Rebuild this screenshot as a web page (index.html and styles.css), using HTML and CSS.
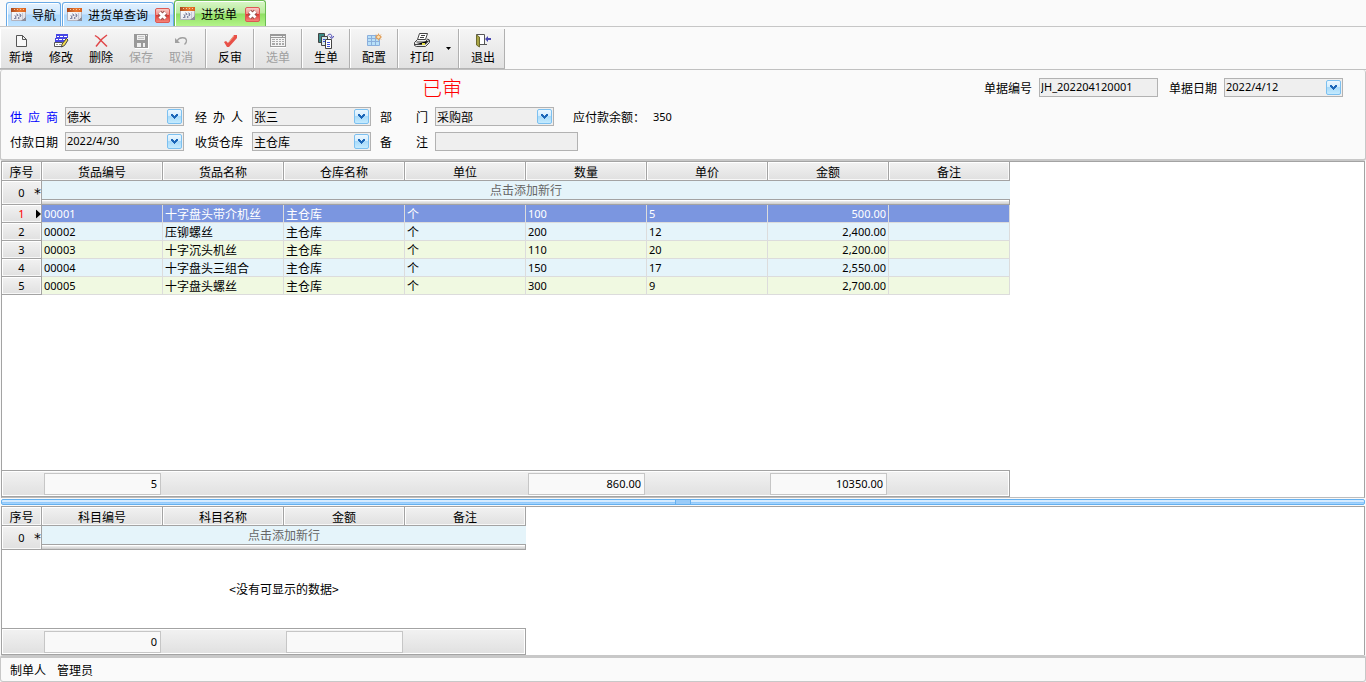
FILE: index.html
```html
<!DOCTYPE html>
<html lang="zh-CN">
<head>
<meta charset="utf-8">
<title>进货单</title>
<link rel="stylesheet" href="styles.css">
</head>
<body>
<svg class="defs" aria-hidden="true">
  <defs>
    <linearGradient id="btn-blue" x1="0" y1="0" x2="0" y2="1">
      <stop offset="0" stop-color="#eef8ff"/><stop offset=".48" stop-color="#d2ecfd"/>
      <stop offset=".5" stop-color="#a9daf9"/><stop offset="1" stop-color="#c6ecff"/>
    </linearGradient>
    <linearGradient id="btn-red" x1="0" y1="0" x2="0" y2="1">
      <stop offset="0" stop-color="#fbd0cc"/><stop offset=".48" stop-color="#f08a84"/>
      <stop offset=".5" stop-color="#e03a33"/><stop offset="1" stop-color="#f68a80"/>
    </linearGradient>
    <linearGradient id="cal-head" x1="0" y1="0" x2="1" y2="0">
      <stop offset="0" stop-color="#a8481c"/><stop offset=".6" stop-color="#ec7a30"/><stop offset="1" stop-color="#d9601c"/>
    </linearGradient>
    <linearGradient id="cal-page" x1="0" y1="0" x2="1" y2="1">
      <stop offset="0" stop-color="#fff"/><stop offset="1" stop-color="#dcdce4"/>
    </linearGradient>
  </defs>
  <symbol id="i-sheet" viewBox="0 0 16 16">
    <path fill="url(#cal-page)" stroke="#b4b4be" d="M.5 2.500h14v11H.5z"/>
    <path fill="url(#cal-head)" d="M0 1h15v4H0z"/>
    <path fill="#f6c6a4" d="M3 2h1v1H3zM6 2h1v1H6zM9 2h1v1H9zM12 2h1v1h-1z"/>
    <path fill="#c4c6d4" d="M5 6h1v6H5zM8 6h1v6H8zM11 6h1v6h-1zM3 8h9v1H3z"/>
    <path fill="#8488a4" d="M4 9h1v3H4zM6 7h1v2H6zM7 10h1v2H7zM9 7h1v3H9zM3 11h2v1H3z"/>
    <path fill="#8c8c98" d="M15 9v5h-5l2-2h1v-1h1z"/>
  </symbol>
  <symbol id="i-close" viewBox="0 0 15 15">
    <rect x=".5" y=".5" width="14" height="14" rx="1.500" fill="url(#btn-red)" stroke="#dc5a54"/>
    <path stroke="#98524e" stroke-width="4.600" d="M4.500 4.500l6 6M10.500 4.500l-6 6"/>
    <path stroke="#fff" stroke-width="2.800" d="M4.500 4.500l6 6M10.500 4.500l-6 6"/>
  </symbol>
  <symbol id="i-drop" viewBox="0 0 15 15">
    <rect x=".5" y=".5" width="14" height="14" rx="1.500" fill="url(#btn-blue)" stroke="#7cc0f0"/>
    <path fill="#1c66b8" d="M4 5h2v1h1v1h1V6h1V5h2v2h-1v1H9v1H8v1H7V9H6V8H5V7H4z"/>
  </symbol>
</svg>

<nav class="tabs">
  <a class="tab" href="#nav"><svg class="ico"><use href="#i-sheet"/></svg><span>导航</span></a>
  <div class="tab tab-closable"><a href="#query"><svg class="ico"><use href="#i-sheet"/></svg><span>进货单查询</span></a><button class="tab-close" aria-label="关闭进货单查询"><svg><use href="#i-close"/></svg></button></div>
  <div class="tab tab-closable tab-active"><a href="#order" aria-current="page"><svg class="ico"><use href="#i-sheet"/></svg><span>进货单</span></a><button class="tab-close" aria-label="关闭进货单"><svg><use href="#i-close"/></svg></button></div>
</nav>

<header class="toolbar-row">
  <div class="toolbar" role="toolbar" aria-label="单据操作">
    <div class="tool-group tool-group-first">
      <button class="tool"><svg class="ico" viewBox="0 0 16 16"><path fill="#f8f8f8" stroke="#555" d="M3.500 2.500h6l4 4v7h-10zM9.500 2.500v4h4"/></svg><span>新增</span></button>
      <button class="tool"><svg class="ico" viewBox="0 0 16 16"><path fill="#4646e4" d="M3 1h12v4H3zM2 5h12v4H2z"/><path fill="#fff" d="M4 3h2v1H4zM7 3h3v1H7zM11 3h3v1h-3zM3 6h2v1H3zM6 6h3v1H6zM10 6h2v1h-2z"/><path fill="#fff" stroke="#555" d="M1.500 9.500h8v4h-8z"/><path stroke="#999" stroke-dasharray="2 1" d="M3 11.500h6"/><path fill="#f6dc4a" stroke="#444" d="M13.500 5.500l1.500 1.500-3.500 5.500-3 1.500.5-3z"/></svg><span>修改</span></button>
      <button class="tool"><svg class="ico" viewBox="0 0 16 16"><path fill="none" stroke="#e0484a" stroke-width="1.500" d="M2 2.500l3 2 9 9M14 2L9 6l-6 7.500"/></svg><span>删除</span></button>
      <button class="tool" disabled><svg class="ico" viewBox="0 0 16 16"><path fill="#fff" d="M2 3h14v13H2z"/><path fill="#999" d="M1 1h14v14H2l-1-1z"/><path fill="#f0f0f0" d="M4 2h8v5H4zM13 2h1v1h-1zM4 10h4v4H4zM10 10h2v4h-2z"/><path stroke="#c4c4c4" d="M5 3.500h6M5 5.500h6"/></svg><span>保存</span></button>
      <button class="tool" disabled><svg class="ico" viewBox="0 0 16 16"><path fill="none" stroke="#a0a0a0" stroke-width="1.300" d="M4 8c2-4 9-4.500 9.500-.5.2 2-1 3-2 4"/><path fill="#a0a0a0" d="M2 5v5h5z"/></svg><span>取消</span></button>
    </div>
    <div class="tool-group"><button class="tool"><svg class="ico" viewBox="0 0 16 16"><path fill="#e85048" d="M2 9l2-1 2 2 6-8h3v3L7 14H5z"/><path stroke="#f0a080" d="M7 9l5-6"/></svg><span>反审</span></button></div>
    <div class="tool-group"><button class="tool" disabled><svg class="ico" viewBox="0 0 16 16"><path fill="#fff" d="M1 3h16v12H1z"/><path fill="#999" d="M0 1h16v13H0z"/><path fill="#f4f4f4" d="M1 5h14v8H1zM1 3h11v1H1zM13 3h2v1h-2z"/><path fill="#aaa" d="M2 6h3v1H2zM6 6h2v1H6zM9 6h2v1H9zM12 6h2v1h-2zM2 8h3v1H2zM6 8h2v1H6zM9 8h2v1H9zM12 8h2v1h-2zM2 10h3v2H2zM6 10h2v2H6zM9 10h2v2H9zM12 10h2v2h-2z"/></svg><span>选单</span></button></div>
    <div class="tool-group"><button class="tool"><svg class="ico" viewBox="0 0 16 16"><path fill="#3a8a86" stroke="#444" d="M.5.500h6v9h-6z"/><path fill="#d8e8ec" stroke="#444" d="M3.500 3.500h6v9h-6z"/><path fill="#fff" stroke="#444" d="M7.500 6.500h6v9h-6z"/><path stroke="#3f51d8" d="M9 9.500h3M9 11.500h3M9 13.500h3M5 6.500h2M5 8.500h2"/><path fill="none" stroke="#4a48b4" d="M9.500 2.500q4-3.500 4.500 2M11.500 3.500l2.500 2 2-2.500"/></svg><span>生单</span></button></div>
    <div class="tool-group"><button class="tool"><svg class="ico" viewBox="0 0 16 16"><path fill="#b8e0f8" stroke="#8aaedc" d="M1.500 2.500h12v10h-12z"/><path stroke="#8aaedc" d="M5.500 3v9M9.500 3v9M2 5.500h11M2 8.500h11"/><path stroke="#e8a868" d="M12.500.500v7M9 4h7M10 1.500l5 5M15 1.500l-5 5"/><circle cx="12.500" cy="4" r="2" fill="#ffe0b0" stroke="#dc9850"/></svg><span>配置</span></button></div>
    <div class="tool-group">
      <button class="tool"><svg class="ico" viewBox="0 0 16 16"><path fill="#fff" stroke="#444" d="M5.500.500h8l-2 6h-8z"/><path stroke="#444" d="M7 2.500h4M6 4.500h4"/><path fill="#e8e8e8" stroke="#444" d="M3.500 6.500l-3 3v3l2 1h9l4-4V7l-2-1-2 3h-9"/><path stroke="#444" d="M1 11.500h10l4-4"/><path fill="#e8e048" d="M8 10h3v2H8z"/></svg><span>打印</span></button>
      <button class="tool-more" aria-label="打印选项"><svg viewBox="0 0 5 3"><path d="M0 0h5L2.500 3z"/></svg></button>
    </div>
    <div class="tool-group tool-group-last"><button class="tool"><svg class="ico" viewBox="0 0 16 16"><path fill="#fff" stroke="#555" d="M1.500 1.500h8v10h-8z"/><path fill="#a8a444" stroke="#6c6a30" d="M1.500 2l3 2v10l-3-2z"/><path fill="none" stroke="#555" d="M5 11.500h7"/><path fill="#4a48b0" d="M10 6l3-3v2h3v2h-3v2z"/></svg><span>退出</span></button></div>
  </div>
</header>

<form class="order-form">
  <div class="form-head">
    <strong class="status">已审</strong>
    <div class="doc-fields">
      <label for="doc-no">单据编号</label><input class="field" id="doc-no" value="JH_202204120001" readonly>
      <label class="doc-date-label" for="doc-date">单据日期</label>
      <div class="field combo"><input id="doc-date" value="2022/4/12" readonly><button type="button" aria-label="选择单据日期"><svg><use href="#i-drop"/></svg></button></div>
    </div>
  </div>
  <div class="form-grid">
    <label class="required" for="supplier">供 应 商</label>
    <div class="field combo"><select id="supplier"><option>德米</option></select><svg><use href="#i-drop"/></svg></div>
    <label for="handler">经 办 人</label>
    <div class="field combo"><select id="handler"><option>张三</option></select><svg><use href="#i-drop"/></svg></div>
    <label for="dept">部 门</label>
    <div class="field combo"><select id="dept"><option>采购部</option></select><svg><use href="#i-drop"/></svg></div>
    <p class="payable"><span>应付款余额：</span><span class="num">350</span></p>
    <label for="pay-date">付款日期</label>
    <div class="field combo"><input id="pay-date" value="2022/4/30" readonly><button type="button" aria-label="选择付款日期"><svg><use href="#i-drop"/></svg></button></div>
    <label for="warehouse">收货仓库</label>
    <div class="field combo"><select id="warehouse"><option>主仓库</option></select><svg><use href="#i-drop"/></svg></div>
    <label for="remark">备 注</label>
    <input class="field remark" id="remark" readonly>
  </div>
</form>

<main class="panes">
  <section class="pane pane-items" aria-label="货品明细">
    <table class="grid grid-items">
      <colgroup><col class="col-no"><col span="8"></colgroup>
      <thead><tr><th>序号</th><th>货品编号</th><th>货品名称</th><th>仓库名称</th><th>单位</th><th>数量</th><th>单价</th><th>金额</th><th>备注</th></tr></thead>
      <tbody>
        <tr class="new-row"><th><span class="row-no">0</span><span class="mark">*</span></th><td colspan="8"><div class="new-hint">点击添加新行</div><div class="new-bar"></div></td></tr>
        <tr class="selected"><th><span class="row-no">1</span><svg class="mark" viewBox="0 0 5 9"><path d="M0 0l5 4.500L0 9z"/></svg></th><td class="num">00001</td><td>十字盘头带介机丝</td><td>主仓库</td><td>个</td><td class="num">100</td><td class="num">5</td><td class="num money">500.00</td><td></td></tr>
        <tr><th><span class="row-no">2</span></th><td class="num">00002</td><td>压铆螺丝</td><td>主仓库</td><td>个</td><td class="num">200</td><td class="num">12</td><td class="num money">2,400.00</td><td></td></tr>
        <tr class="alt"><th><span class="row-no">3</span></th><td class="num">00003</td><td>十字沉头机丝</td><td>主仓库</td><td>个</td><td class="num">110</td><td class="num">20</td><td class="num money">2,200.00</td><td></td></tr>
        <tr><th><span class="row-no">4</span></th><td class="num">00004</td><td>十字盘头三组合</td><td>主仓库</td><td>个</td><td class="num">150</td><td class="num">17</td><td class="num money">2,550.00</td><td></td></tr>
        <tr class="alt"><th><span class="row-no">5</span></th><td class="num">00005</td><td>十字盘头螺丝</td><td>主仓库</td><td>个</td><td class="num">300</td><td class="num">9</td><td class="num money">2,700.00</td><td></td></tr>
      </tbody>
    </table>
    <div class="pane-space"></div>
    <div class="summary summary-items">
      <span></span><output class="sum">5</output><span></span><span></span><span></span><output class="sum">860.00</output><span></span><output class="sum">10350.00</output><span></span>
    </div>
  </section>

  <div class="splitter" role="separator" aria-orientation="horizontal"><span class="grip"></span></div>

  <section class="pane pane-subjects" aria-label="科目明细">
    <table class="grid grid-subjects">
      <colgroup><col class="col-no"><col span="4"></colgroup>
      <thead><tr><th>序号</th><th>科目编号</th><th>科目名称</th><th>金额</th><th>备注</th></tr></thead>
      <tbody>
        <tr class="new-row"><th><span class="row-no">0</span><span class="mark">*</span></th><td colspan="4"><div class="new-hint">点击添加新行</div><div class="new-bar"></div></td></tr>
      </tbody>
    </table>
    <p class="empty">&lt;没有可显示的数据&gt;</p>
    <div class="summary summary-subjects">
      <span></span><output class="sum">0</output><span></span><output class="sum"></output><span></span>
    </div>
  </section>
</main>

<footer class="status-bar"><span>制单人</span><span>管理员</span></footer>
</body>
</html>
```

FILE: styles.css
```css
:root {
  --cjk: "Noto Sans CJK SC", sans-serif;
  --latin: "Noto Sans", "Noto Sans CJK SC", sans-serif;
  --line: #a3a3a3;
  --band: #c8c8c8;
  --face: linear-gradient(#f2f2f2, #e0e0e0);
}

* { box-sizing: border-box; }

body {
  margin: 0;
  min-height: 100vh;
  display: flex;
  flex-direction: column;
  background: #fafafa;
  color: #000;
  font: 12px/16px var(--cjk);
}

button, input, select {
  margin: 0;
  padding: 0;
  border: 0;
  background: none;
  color: inherit;
  font: inherit;
}

p { margin: 0; }
svg { display: block; flex: none; }
.defs { position: absolute; width: 0; height: 0; }
.ico { width: 16px; height: 16px; }
.num { font-family: var(--latin); font-size: 11px; }

/* Tabs */
.tabs {
  display: flex;
  align-items: flex-end;
  height: 27px;
  padding-left: 6px;
  border-bottom: 1px solid #c6c6c6;
}
.tab {
  display: flex;
  align-items: center;
  height: 24px;
  margin-right: 1px;
  padding: 1px 4px 0;
  gap: 5px;
  border: 1px solid #68a9e6;
  border-bottom: 0;
  border-radius: 3px 3px 0 0;
  background: linear-gradient(#e4f2ff, #cbe5fd 48%, #abd6fc 52%, #bfe3ff);
  box-shadow: inset 1px 1px #fff;
  color: #000;
  text-decoration: none;
}
.tab a {
  display: flex;
  align-items: center;
  gap: 5px;
  color: inherit;
  text-decoration: none;
}
.tab-closable { gap: 7px; margin-right: 0; padding-right: 3px; }
.tab-active {
  height: 26px;
  padding: 1px 5px 0 5px;
  gap: 8px;
  border-color: #6bbb52;
  background: linear-gradient(#d9f6c8, #b9ec9d 48%, #8fdf62 52%, #b4f48a);
}
.tab-close, .tab-close svg { width: 15px; height: 15px; }

/* Toolbar */
.toolbar-row {
  display: flex;
  padding-top: 2px;
  border-bottom: 1px solid #c0c0c0;
}
.toolbar {
  display: flex;
  height: 40px;
  margin-left: 1px;
  border-bottom: 1px solid #b4b4b4;
  background: linear-gradient(#f5f5f5, #e2e2e2);
}
.tool-group {
  display: flex;
  padding: 0 3px;
  border-left: 1px solid #fff;
  border-right: 1px solid #b0b0b0;
}
.tool-group-first { padding-left: 0; padding-right: 4px; }
.tool-group-last { padding-right: 1px; }
.toolbar { margin-left: 0; }
.tool {
  display: flex;
  flex-direction: column;
  align-items: center;
  width: 40px;
  padding-top: 4px;
}
.tool:disabled { color: #a0a0a0; }
.tool-more { width: 13px; padding: 0 4px; }
.tool-more svg { width: 5px; height: 3px; }

/* Order header form */
.order-form {
  display: flex;
  flex-direction: column;
  gap: 9px;
  padding: 7px 22px 8px 9px;
  border: 1px solid var(--band);
  border-top: 0;
  border-bottom-width: 2px;
  border-radius: 3px;
}
.form-head {
  display: flex;
  align-items: center;
  justify-content: space-between;
}
.status {
  padding-left: 412px;
  color: #f00;
  font-size: 20px;
  font-weight: 300;
  line-height: 21px;
}
.doc-fields { display: flex; align-items: center; gap: 7px; }
.doc-date-label { margin-left: 4px; }
.form-grid {
  display: grid;
  grid-template-columns: 55px 130px 57px 128px 55px 138px auto;
  row-gap: 6px;
  align-items: center;
}
.form-grid label { width: 48px; text-align-last: justify; white-space: nowrap; }
.required { color: #00f; }
.field {
  width: 119px;
  height: 19px;
  padding: 0 1px;
  border: 1px solid #b2b2b2;
  background: #efefef;
}
input.field, .field input { padding-bottom: 2px; font: 11px/15px var(--latin); }
.combo { display: flex; align-items: center; }
.combo input, .combo select {
  flex: 1;
  min-width: 0;
  height: 17px;
  appearance: none;
}
.combo select { line-height: 17px; }
.combo svg { width: 15px; height: 15px; pointer-events: none; }
.remark { width: 143px; grid-column: 6 / 8; }
.payable { display: flex; align-items: center; gap: 8px; }

/* Data panes */
.panes { flex: 1; display: flex; flex-direction: column; }
.pane {
  display: flex;
  flex-direction: column;
  margin: 0 1px;
  border: 1px solid var(--line);
  border-bottom: 0;
  background: #fff;
}
.pane-items { flex: 1; border-bottom: 1px solid #bdbdbd; }
.pane-space { flex: 1; }

.grid { table-layout: fixed; border-collapse: separate; border-spacing: 0; }
.grid-items { width: 1008px; }
.grid-subjects { width: 524px; }
.col-no { width: 40px; }
.grid th, .grid td {
  height: 18px;
  padding: 0;
  line-height: 16px;
  overflow: hidden;
  white-space: nowrap;
}
.grid th {
  position: relative;
  border-right: 1px solid var(--line);
  border-bottom: 1px solid var(--line);
  background: var(--face);
  box-shadow: inset 1px 1px #fff, inset -1px -1px #f8f8f8;
  font-weight: 400;
}
.grid thead th { height: 19px; padding-top: 1px; }
.grid td {
  padding-left: 2px;
  border-right: 1px solid #dcdcdc;
  border-bottom: 1px solid #dcdcdc;
  background: #e5f4fa;
}
.grid .alt td { background: #f0f9e1; }
.grid .selected td { background: #7b96e0; color: #fff; }
.grid .selected .row-no { color: #f00; }
.grid .money { padding-right: 2px; text-align: right; }
.row-no { font: 11px/16px var(--latin); }
.mark { position: absolute; right: 0; top: 50%; transform: translateY(-50%); }
span.mark { font: 14px/16px "DejaVu Sans", sans-serif; }
svg.mark { width: 5px; height: 9px; }
.grid .new-row td { padding: 0; border: 0; text-align: center; }
.new-hint { height: 18px; line-height: 18px; color: #666; }
.new-bar {
  height: 6px;
  border: 1px solid var(--line);
  border-left: 0;
  background: linear-gradient(#fff 25%, #eee 25%, #ccc);
}

.summary {
  display: grid;
  height: 27px;
  border: 1px solid var(--line);
  border-left: 0;
  background: var(--face);
  box-shadow: inset 1px 1px #fff, inset -1px -1px #fff;
}
.summary-items { width: 1008px; grid-template-columns: 40px repeat(7, 121px) 120px; }
.summary-subjects { width: 524px; grid-template-columns: 40px repeat(3, 121px) 120px; }
.sum {
  margin: 2px;
  padding-right: 3px;
  border: 1px solid #c6c6c6;
  background: #f9f9f9;
  font: 11px/20px var(--latin);
  text-align: right;
}

.splitter {
  display: flex;
  justify-content: center;
  height: 6px;
  margin: 1px;
  border: 1px solid #66b0ee;
  border-radius: 2px;
  background: linear-gradient(#d5ebff 50%, #8cc6fa 50%, #a9d7ff);
}
.grip {
  width: 16px;
  border: solid #66b0ee;
  border-width: 0 1px;
  background: #99cbf8;
}

.empty {
  width: 524px;
  padding: 31px 0 31px 40px;
  text-align: center;
}

.status-bar {
  display: flex;
  gap: 11px;
  padding: 4px 9px 3px;
  border: 1px solid var(--band);
  border-top-width: 3px;
  border-radius: 3px;
}
```
